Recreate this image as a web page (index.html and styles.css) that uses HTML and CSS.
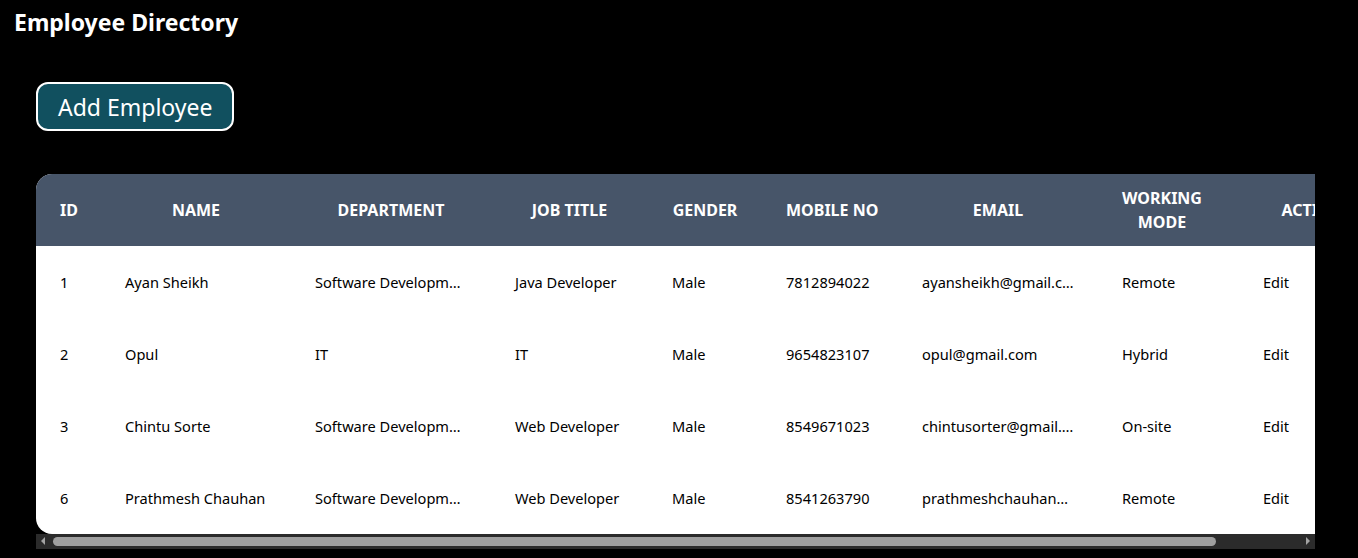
FILE: index.html
```html
<!DOCTYPE html>
<html lang="en">
<head>
<meta charset="utf-8">
<title>Employee Directory</title>
<link rel="stylesheet" href="styles.css">
</head>
<body>
<h1 class="title">Employee Directory</h1>
<div class="toolbar">
  <button class="add-btn" type="button">Add Employee</button>
</div>
<div class="table-scroll">
  <table class="grid">
    <colgroup>
      <col class="c-id"><col class="c-name"><col class="c-dept"><col class="c-job"><col class="c-gender"><col class="c-mobile"><col class="c-email"><col class="c-mode"><col class="c-actions">
    </colgroup>
    <thead>
      <tr>
        <th>ID</th><th>Name</th><th>Department</th><th>Job Title</th><th>Gender</th><th>Mobile No</th><th>Email</th><th class="wrap">Working Mode</th><th>Actions</th>
      </tr>
    </thead>
    <tbody>
      <tr>
        <td>1</td><td>Ayan Sheikh</td><td>Software Development</td><td>Java Developer</td><td>Male</td><td>7812894022</td><td>ayansheikh@gmail.com</td><td>Remote</td><td><span class="edit">Edit</span></td>
      </tr>
      <tr>
        <td>2</td><td>Opul</td><td>IT</td><td>IT</td><td>Male</td><td>9654823107</td><td>opul@gmail.com</td><td>Hybrid</td><td><span class="edit">Edit</span></td>
      </tr>
      <tr>
        <td>3</td><td>Chintu Sorte</td><td>Software Development</td><td>Web Developer</td><td>Male</td><td>8549671023</td><td>chintusorter@gmail.com</td><td>On-site</td><td><span class="edit">Edit</span></td>
      </tr>
      <tr>
        <td>6</td><td>Prathmesh Chauhan</td><td>Software Development</td><td>Web Developer</td><td>Male</td><td>8541263790</td><td>prathmeshchauhan@gmail.com</td><td>Remote</td><td><span class="edit">Edit</span></td>
      </tr>
    </tbody>
  </table>
</div>
<div class="hscroll" aria-hidden="true">
  <span class="arrow arrow-left"></span>
  <span class="track"><span class="thumb"></span></span>
  <span class="arrow arrow-right"></span>
</div>
</body>
</html>
```
FILE: styles.css
```css
html, body {
  margin: 0;
  padding: 0;
  background: #000;
}
body {
  font-family: "Noto Sans", "Open Sans", sans-serif;
  color: #fff;
}
.title {
  margin: 0;
  padding: 6px 14px 0;
  font-size: 23px;
  line-height: 32px;
  font-weight: 700;
}
.toolbar {
  padding: 44px 36px 0;
}
.add-btn {
  font-family: inherit;
  font-size: 23px;
  line-height: 33px;
  padding: 7px 20px 5px;
  color: #fff;
  background: #11505f;
  border: 2px solid #fff;
  border-radius: 12px;
}
.table-scroll {
  margin: 43px 43px 0 36px;
  overflow: hidden;
}
.grid {
  width: 1372px;
  table-layout: fixed;
  border-collapse: separate;
  border-spacing: 0;
  border-radius: 16px;
  overflow: hidden;
  background: #fff;
}
.c-id { width: 65px; }
.c-name { width: 190px; }
.c-dept { width: 200px; }
.c-job { width: 157px; }
.c-gender { width: 114px; }
.c-mobile { width: 136px; }
.c-email { width: 200px; }
.c-mode { width: 128px; }
.c-actions { width: 182px; }
.grid th {
  background: #475569;
  color: #fff;
  font-size: 16px;
  font-weight: 700;
  text-transform: uppercase;
  line-height: 24px;
  height: 48px;
  padding: 12px 24px;
  text-align: center;
  white-space: nowrap;
}
.grid th.wrap {
  white-space: normal;
  padding-left: 16px;
  padding-right: 16px;
}
.grid td {
  color: #000;
  font-size: 14.6px;
  line-height: 24px;
  padding: 24px;
  text-align: left;
  white-space: nowrap;
  overflow: hidden;
  text-overflow: ellipsis;
}
.edit {
  padding-left: 13px;
}
.hscroll {
  display: flex;
  align-items: center;
  height: 15px;
  margin: 0 43px 0 36px;
  background: #2b2b2b;
}
.arrow {
  flex: 0 0 15px;
  height: 15px;
  position: relative;
}
.arrow::after {
  content: "";
  position: absolute;
  top: 3px;
  width: 0;
  height: 0;
  border-top: 4px solid transparent;
  border-bottom: 4px solid transparent;
}
.arrow-left::after {
  left: 5px;
  border-right: 4px solid #a3a3a3;
}
.arrow-right::after {
  left: 6px;
  border-left: 4px solid #a3a3a3;
}
.track {
  flex: 1 1 auto;
  height: 15px;
  display: flex;
  align-items: center;
  padding-left: 2px;
}
.thumb {
  width: 1163px;
  height: 9px;
  border-radius: 5px;
  background: #9f9f9f;
}
```
